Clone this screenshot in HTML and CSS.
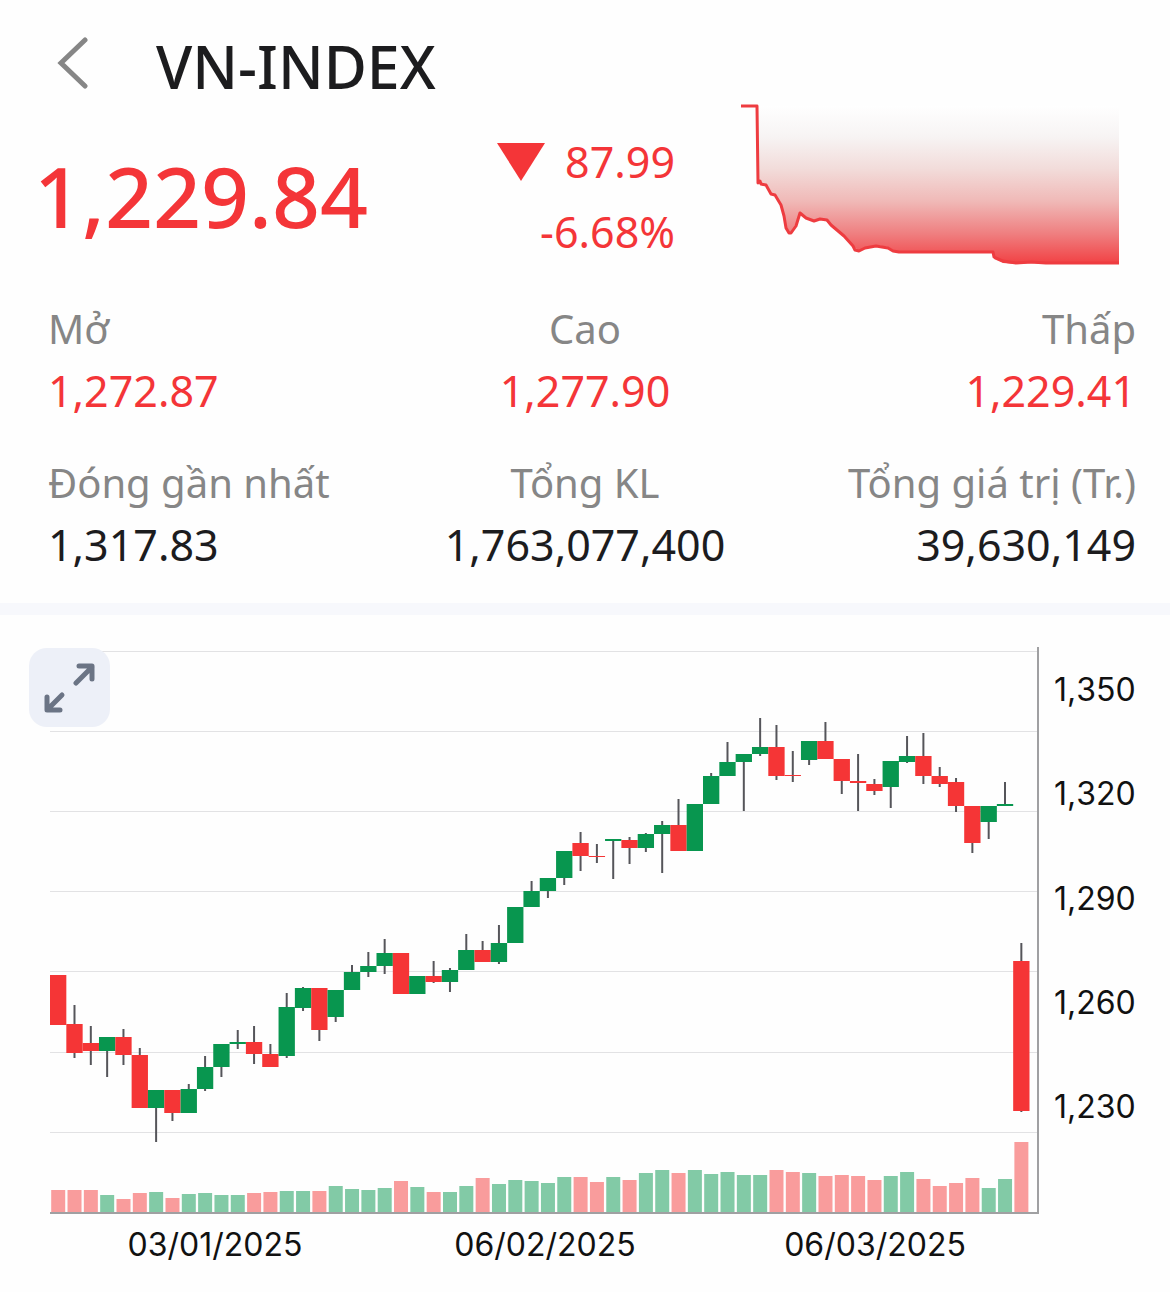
FILE: index.html
```html
<!DOCTYPE html>
<html lang="vi">
<head>
<meta charset="UTF-8">
<title>VN-INDEX</title>
<meta content="width=device-width,initial-scale=1.0" name="viewport">
<link rel="stylesheet" href="styles.css">
</head>
<body>
<header class="topbar">
    <button class="back" type="button" aria-label="Quay lại">
        <svg width="32" height="52" viewBox="0 0 32 52"><path d="M29 3L5 26L29 49"/></svg>
    </button>
    <h1 class="title">VN-INDEX</h1>
</header>
<section class="summary">
    <div class="price">1,229.84</div>
    <div class="change">
        <div class="change-row">
            <svg class="down" width="48" height="38" viewBox="0 0 48 38"><path d="M0 0H48L24 38Z"/></svg>
            <span>87.99</span>
        </div>
        <div class="change-row">-6.68%</div>
    </div>
    <svg class="spark" viewBox="0 0 378 162">
        <defs>
            <linearGradient id="fade" x1="0" y1="0" x2="0" y2="162" gradientUnits="userSpaceOnUse">
                <stop offset="0" stop-color="#ffffff"/>
                <stop offset="0.2" stop-color="#f7f4f4"/>
                <stop offset="0.4" stop-color="#f2dcda"/>
                <stop offset="0.6" stop-color="#f0b9b7"/>
                <stop offset="0.8" stop-color="#ef7f80"/>
                <stop offset="1" stop-color="#f23c3f"/>
            </linearGradient>
        </defs>
        <path fill="url(#fade)" d="M17 2L17 79L24 80L30 89L36 93L40 100L43 112L45 124L50 130L55 121L59 109L65 113L73 116L83 115L90 122L103 132L112 142L118 147L124 144L135 141L147 143L157 149H252L253 155L262 159L275 160L290 159L305 160H378V2Z"/>
        <path class="spark-line" d="M0 2H16L17 79L19 77L20 80L25 81L30 90L34 91L40 101L43 112L45 124L48 129H50L55 122L59 109L65 114L73 117L79 115L86 116L90 121L103 132L112 142L114 146L118 147L124 144L135 142L147 144L152 147L158 148H252L253 153L262 157L275 159L290 158L305 159H378"/>
    </svg>
</section>
<dl class="stats">
    <div class="stat">
        <dt>Mở</dt>
        <dd class="red">1,272.87</dd>
    </div>
    <div class="stat">
        <dt>Cao</dt>
        <dd class="red">1,277.90</dd>
    </div>
    <div class="stat">
        <dt>Thấp</dt>
        <dd class="red">1,229.41</dd>
    </div>
    <div class="stat">
        <dt>Đóng gần nhất</dt>
        <dd>1,317.83</dd>
    </div>
    <div class="stat">
        <dt>Tổng KL</dt>
        <dd>1,763,077,400</dd>
    </div>
    <div class="stat">
        <dt>Tổng giá trị (Tr.)</dt>
        <dd>39,630,149</dd>
    </div>
</dl>
<section class="chart">
    <button class="expand" type="button" aria-label="Phóng to">
        <svg width="52" height="52" viewBox="0 0 52 52">
            <path d="M33 21L49 5M36 4H49V17"/>
            <path d="M19 33L5 47M4 35V48H17"/>
        </svg>
    </button>
    <svg class="plot" id="plot" viewBox="50 647 990 567"></svg>
    <div class="yaxis">
        <span>1,350</span>
        <span>1,320</span>
        <span>1,290</span>
        <span>1,260</span>
        <span>1,230</span>
    </div>
    <div class="xaxis">
        <span>03/01/2025</span>
        <span>06/02/2025</span>
        <span>06/03/2025</span>
    </div>
</section>
<script src="chart.js"></script>
</body>
</html>
```
FILE: styles.css
```css
*{
    margin: 0;
    padding: 0;
    box-sizing: border-box;
}
body{
    background: #fefefe;
    color: #1c1c1e;
    font-family: "Noto Sans", sans-serif;
}
button{
    border: none;
    background: none;
    cursor: pointer;
}
svg{
    display: block;
}

.topbar{
    display: flex;
    align-items: center;
    gap: 68px;
    height: 104px;
    padding: 28px 56px 0;
}
.back{
    padding-bottom: 6px;
}
.back path{
    fill: none;
    stroke: #868686;
    stroke-width: 5;
    stroke-linecap: round;
}
.title{
    font-size: 59px;
    line-height: 76px;
    font-weight: 500;
}

.summary{
    display: grid;
    grid-template-columns: 370fr 271fr 444fr;
    align-items: start;
    padding: 0 51px 0 34px;
    color: #f43538;
}
.price{
    padding-top: 42px;
    font-size: 84px;
    line-height: 100px;
    font-weight: 500;
}
.change{
    padding-top: 23px;
    font-size: 43px;
    line-height: 70px;
}
.change-row{
    display: flex;
    justify-content: flex-end;
    align-items: center;
    gap: 20px;
}
.down{
    fill: #f43538;
}
.spark{
    width: 100%;
    padding-left: 66px;
}
.spark-line{
    fill: none;
    stroke: #ee3c40;
    stroke-width: 3;
    stroke-linejoin: round;
}

.stats{
    display: grid;
    grid-template-columns: 1fr 1fr 1fr;
    row-gap: 29px;
    padding: 31px 34px 26px;
    border-bottom: 12px solid #f7f8fc;
}
.stat:nth-child(3n+1){
    padding-left: 14px;
}
.stat:nth-child(3n+2){
    text-align: center;
}
.stat:nth-child(3n){
    text-align: right;
}
.stat dt{
    color: #868686;
    font-size: 40px;
    line-height: 61px;
    white-space: nowrap;
}
.stat dd{
    font-size: 43px;
    line-height: 64px;
}
.stat .red{
    color: #f43538;
}

.chart{
    position: relative;
    display: grid;
    grid-template-columns: 1fr 130px;
    padding: 32px 0 24px 50px;
    color: #111;
    font-family: Inter, sans-serif;
    font-size: 32px;
    line-height: 40px;
    font-kerning: none;
}
/* sits over the top left corner of the plot */
.expand{
    position: absolute;
    top: 33px;
    left: 29px;
    width: 81px;
    height: 79px;
    padding: 13px 14px;
    border-radius: 18px;
    background: #edf0f8;
}
.expand path{
    fill: none;
    stroke: #6b7485;
    stroke-width: 5;
    stroke-linecap: round;
    stroke-linejoin: round;
}
.plot{
    width: 100%;
}
.yaxis{
    display: flex;
    flex-direction: column;
    justify-content: space-between;
    padding: 23px 0 87px 14px;
}
.xaxis{
    display: grid;
    grid-template-columns: 1fr 1fr 1fr;
    padding-top: 11px;
    text-align: center;
}
.grid{
    stroke: #e2e2e4;
    stroke-width: 1;
}
.axis{
    stroke: #a0a0a2;
    stroke-width: 2;
}
.wick{
    stroke: #55555a;
    stroke-width: 2;
}
.up{
    fill: #08964f;
}
.fall{
    fill: #f53536;
}
.vol.up{
    fill: #82caa6;
}
.vol.fall{
    fill: #f99c9c;
}
```
FILE: chart.js
```javascript
// direction, body top, body bottom, wick top, wick bottom, volume top
var candles=[
    ["r",975,1025,975,1025,1190],
    ["r",1024,1053,1005,1058,1190],
    ["r",1043,1051,1026,1065,1190],
    ["g",1037,1051,1037,1077,1195],
    ["r",1037,1055,1029,1065,1199],
    ["r",1055,1108,1048,1108,1193],
    ["g",1090,1108,1090,1142,1192],
    ["r",1090,1113,1090,1121,1198],
    ["g",1089,1113,1084,1113,1194],
    ["g",1067,1089,1056,1091,1193],
    ["g",1044,1067,1044,1077,1195],
    ["g",1042,1044,1030,1049,1195],
    ["r",1042,1054,1026,1064,1193],
    ["r",1054,1067,1044,1067,1192],
    ["g",1007,1056,993,1058,1191],
    ["g",988,1008,987,1011,1191],
    ["r",988,1030,988,1041,1191],
    ["g",990,1017,990,1022,1186],
    ["g",972,990,965,990,1189],
    ["g",966,972,952,977,1190],
    ["g",953,966,939,974,1188],
    ["r",953,994,953,994,1181],
    ["g",976,994,976,994,1187],
    ["r",976,982,961,983,1192],
    ["g",970,982,968,992,1192],
    ["g",950,970,934,970,1186],
    ["r",950,962,941,962,1178],
    ["g",943,962,925,964,1184],
    ["g",907,943,907,943,1180],
    ["g",891,907,881,907,1181],
    ["g",878,891,878,898,1183],
    ["g",851,878,851,885,1177],
    ["r",843,856,832,871,1177],
    ["r",856,857,844,863,1182],
    ["g",839,841,839,879,1177],
    ["r",840,848,837,864,1180],
    ["g",834,848,833,852,1173],
    ["g",825,834,821,873,1170],
    ["r",825,851,799,851,1173],
    ["g",804,851,804,851,1170],
    ["g",776,804,773,804,1174],
    ["g",762,776,742,776,1172],
    ["g",754,762,754,811,1175],
    ["g",747,754,718,756,1175],
    ["r",747,776,725,780,1170],
    ["r",775,776,751,782,1172],
    ["g",741,760,741,765,1173],
    ["r",741,759,722,759,1176],
    ["r",759,781,759,794,1175],
    ["r",781,783,754,811,1176],
    ["r",784,791,779,795,1180],
    ["g",761,787,761,808,1176],
    ["g",756,762,736,763,1172],
    ["r",756,776,733,784,1179],
    ["r",776,784,767,787,1186],
    ["r",782,806,778,812,1183],
    ["r",806,843,806,853,1178],
    ["g",806,822,806,839,1188],
    ["g",804,806,782,806,1179],
    ["r",961,1111,943,1112,1142]
];
var gridLines=[651,731,811,891,971,1052,1132];
var left=50;
var right=1038;
var bottom=1213;
var step=16.325;

function line(cls,x1,y1,x2,y2){
    return '<line class="'+cls+'" x1="'+x1+'" y1="'+y1+'" x2="'+x2+'" y2="'+y2+'"/>';
}
function rect(cls,x,y,w,h){
    return '<rect class="'+cls+'" x="'+x+'" y="'+y+'" width="'+w+'" height="'+h+'"/>';
}
function draw(){
    var out="";
    for(var i=0;i<gridLines.length;i++){
        out+=line("grid",left,gridLines[i]+0.5,right,gridLines[i]+0.5);
    }
    for(i=0;i<candles.length;i++){
        var c=candles[i];
        var x=left+i*step;
        var cls=c[0]=="g"?"up":"fall";
        out+=line("wick",x+step/2,c[3],x+step/2,c[4]);
        out+=rect(cls,x,c[1],step,c[2]-c[1]);
        out+=rect("vol "+cls,x+1.2,c[5],14,bottom-c[5]);
    }
    out+=line("axis",left,bottom,right,bottom);
    out+=line("axis",right,647,right,bottom+1);
    document.getElementById("plot").innerHTML=out;
}
draw();
```
